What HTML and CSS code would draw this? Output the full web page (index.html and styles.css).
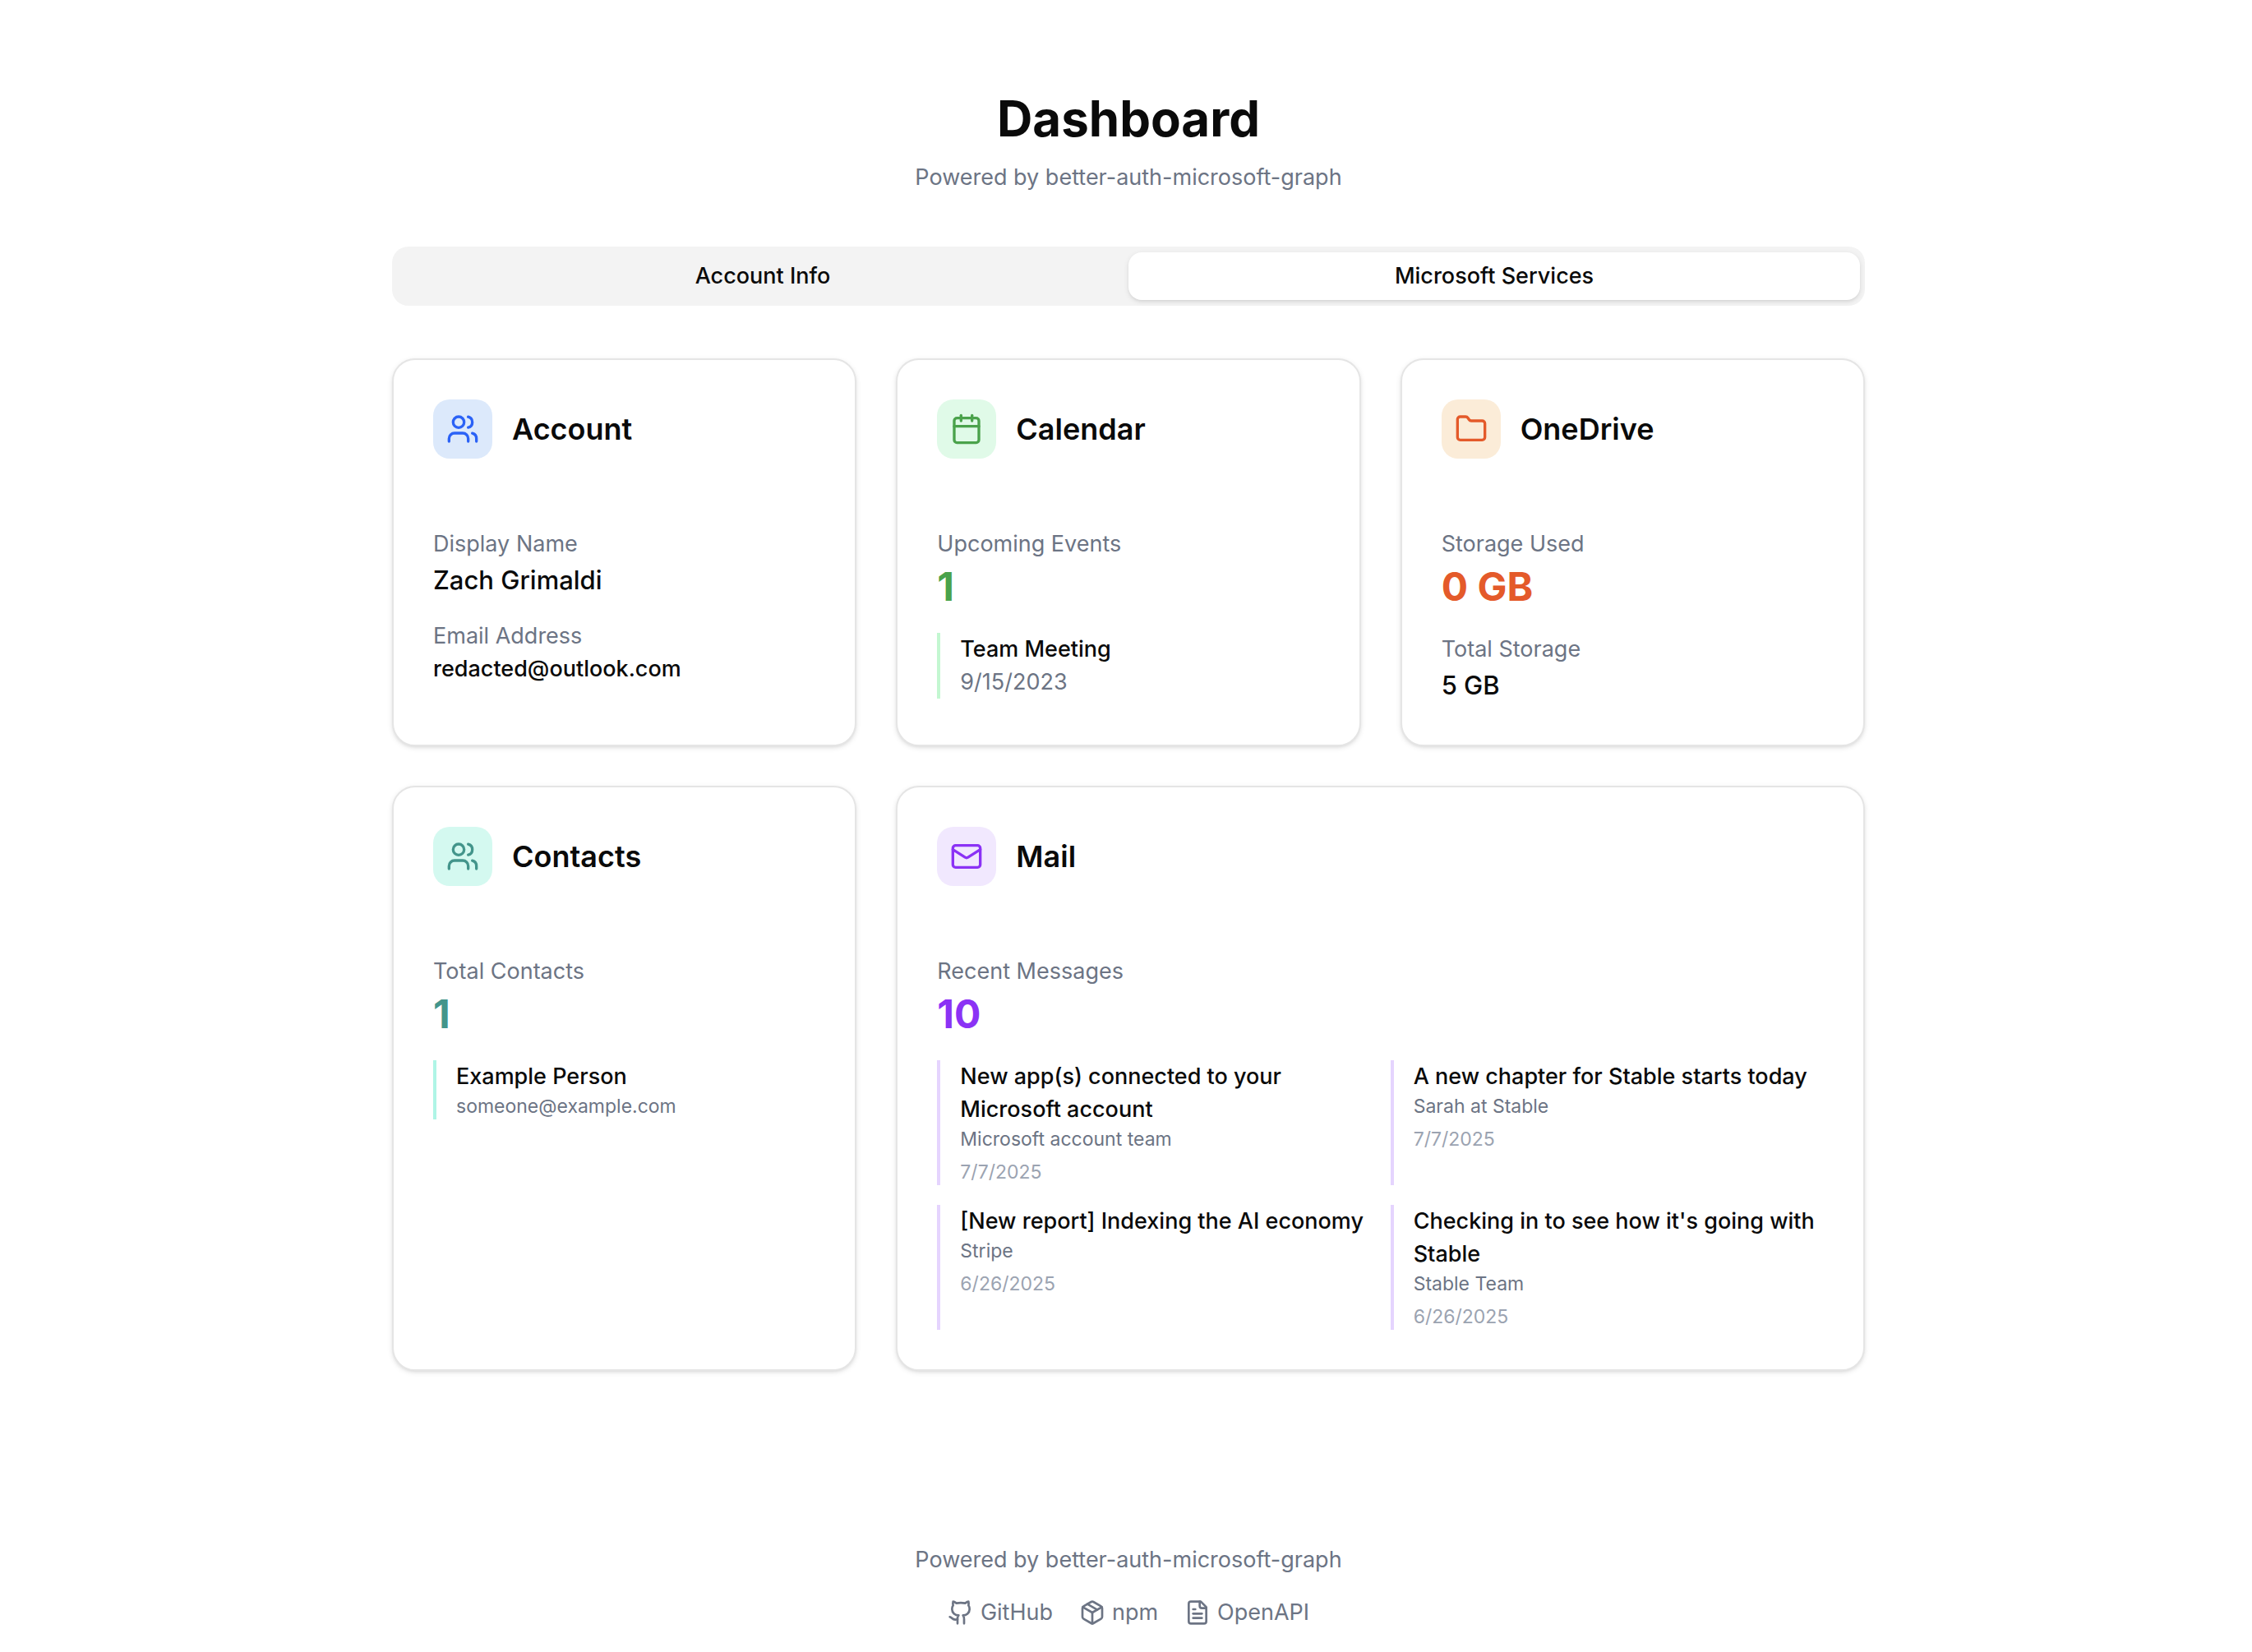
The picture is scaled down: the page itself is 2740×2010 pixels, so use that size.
FILE: index.html
```html
<!DOCTYPE html>
<html lang="en">
<head>
<meta charset="utf-8">
<meta name="viewport" content="width=device-width, initial-scale=1">
<title>Dashboard</title>
<link rel="stylesheet" href="styles.css">
</head>
<body>
<svg class="sprite" aria-hidden="true">
  <symbol id="users" viewBox="0 0 24 24"><path d="M16 21v-2a4 4 0 0 0-4-4H6a4 4 0 0 0-4 4v2"/><circle cx="9" cy="7" r="4"/><path d="M22 21v-2a4 4 0 0 0-3-3.87"/><path d="M16 3.13a4 4 0 0 1 0 7.75"/></symbol>
</svg>
<div class="page">
  <header class="hero">
    <h1 class="hero-title">Dashboard</h1>
    <p class="muted">Powered by better-auth-microsoft-graph</p>
  </header>

  <div class="tabs" role="tablist">
    <button class="tab" type="button" role="tab" aria-selected="false">Account Info</button>
    <button class="tab tab-active" type="button" role="tab" aria-selected="true">Microsoft Services</button>
  </div>

  <main class="cards">
    <section class="card blue">
      <div class="card-head">
        <span class="badge"><svg class="icon"><use href="#users"/></svg></span>
        <h2 class="card-title">Account</h2>
      </div>
      <div class="card-body">
        <div>
          <p class="muted">Display Name</p>
          <p class="value">Zach Grimaldi</p>
        </div>
        <div>
          <p class="muted">Email Address</p>
          <p class="strong">redacted@outlook.com</p>
        </div>
      </div>
    </section>

    <section class="card green">
      <div class="card-head">
        <span class="badge"><svg class="icon" viewBox="0 0 24 24"><path d="M8 2v4"/><path d="M16 2v4"/><rect width="18" height="18" x="3" y="4" rx="2"/><path d="M3 10h18"/></svg></span>
        <h2 class="card-title">Calendar</h2>
      </div>
      <div class="card-body">
        <div>
          <p class="muted">Upcoming Events</p>
          <p class="figure">1</p>
        </div>
        <div class="item">
          <p class="strong">Team Meeting</p>
          <p class="muted">9/15/2023</p>
        </div>
      </div>
    </section>

    <section class="card orange">
      <div class="card-head">
        <span class="badge"><svg class="icon" viewBox="0 0 24 24"><path d="M20 20a2 2 0 0 0 2-2V8a2 2 0 0 0-2-2h-7.900a2 2 0 0 1-1.690-.900L9.600 3.900A2 2 0 0 0 7.930 3H4a2 2 0 0 0-2 2v13a2 2 0 0 0 2 2Z"/></svg></span>
        <h2 class="card-title">OneDrive</h2>
      </div>
      <div class="card-body">
        <div>
          <p class="muted">Storage Used</p>
          <p class="figure">0 GB</p>
        </div>
        <div>
          <p class="muted">Total Storage</p>
          <p class="value">5 GB</p>
        </div>
      </div>
    </section>

    <section class="card teal">
      <div class="card-head">
        <span class="badge"><svg class="icon"><use href="#users"/></svg></span>
        <h2 class="card-title">Contacts</h2>
      </div>
      <div class="card-body">
        <div>
          <p class="muted">Total Contacts</p>
          <p class="figure">1</p>
        </div>
        <div class="item">
          <p class="strong">Example Person</p>
          <p class="small">someone@example.com</p>
        </div>
      </div>
    </section>

    <section class="card wide purple">
      <div class="card-head">
        <span class="badge"><svg class="icon" viewBox="0 0 24 24"><rect width="20" height="16" x="2" y="4" rx="2"/><path d="m22 7-8.970 5.700a1.940 1.940 0 0 1-2.060 0L2 7"/></svg></span>
        <h2 class="card-title">Mail</h2>
      </div>
      <div class="card-body">
        <div>
          <p class="muted">Recent Messages</p>
          <p class="figure">10</p>
        </div>
        <div class="messages">
          <article class="item">
            <p class="strong">New app(s) connected to your Microsoft account</p>
            <p class="small">Microsoft account team</p>
            <p class="small date">7/7/2025</p>
          </article>
          <article class="item">
            <p class="strong">A new chapter for Stable starts today</p>
            <p class="small">Sarah at Stable</p>
            <p class="small date">7/7/2025</p>
          </article>
          <article class="item">
            <p class="strong">[New report] Indexing the AI economy</p>
            <p class="small">Stripe</p>
            <p class="small date">6/26/2025</p>
          </article>
          <article class="item">
            <p class="strong">Checking in to see how it's going with Stable</p>
            <p class="small">Stable Team</p>
            <p class="small date">6/26/2025</p>
          </article>
        </div>
      </div>
    </section>
  </main>

  <footer class="footer">
    <p class="muted">Powered by better-auth-microsoft-graph</p>
    <nav class="links">
      <a class="link" href="#github"><svg class="icon" viewBox="0 0 24 24"><path d="M15 22v-4a4.800 4.800 0 0 0-1-3.500c3 0 6-2 6-5.500.080-1.250-.270-2.480-1-3.500.280-1.150.280-2.350 0-3.500 0 0-1 0-3 1.500-2.640-.500-5.360-.500-8 0C6 2 5 2 5 2c-.300 1.150-.300 2.350 0 3.500A5.403 5.403 0 0 0 4 9c0 3.500 3 5.500 6 5.500-.390.490-.680 1.050-.850 1.650-.170.600-.220 1.230-.150 1.850v4"/><path d="M9 18c-4.510 2-5-2-7-2"/></svg>GitHub</a>
      <a class="link" href="#npm"><svg class="icon" viewBox="0 0 24 24"><path d="M11 21.730a2 2 0 0 0 2 0l7-4A2 2 0 0 0 21 16V8a2 2 0 0 0-1-1.730l-7-4a2 2 0 0 0-2 0l-7 4A2 2 0 0 0 3 8v8a2 2 0 0 0 1 1.730z"/><path d="M12 22V12"/><path d="M3.290 7 12 12l8.710-5"/><path d="m7.500 4.270 9 5.150"/></svg>npm</a>
      <a class="link" href="#openapi"><svg class="icon" viewBox="0 0 24 24"><path d="M15 2H6a2 2 0 0 0-2 2v16a2 2 0 0 0 2 2h12a2 2 0 0 0 2-2V7Z"/><path d="M14 2v4a2 2 0 0 0 2 2h4"/><path d="M10 9H8"/><path d="M16 13H8"/><path d="M16 17H8"/></svg>OpenAPI</a>
    </nav>
  </footer>
</div>
</body>
</html>
```
FILE: styles.css
```css
* {
  box-sizing: border-box;
}

body,
h1,
h2,
p {
  margin: 0;
}

body {
  background: #fff;
  color: #0a0a0a;
  font-family: Inter, "Liberation Sans", sans-serif;
  font-size: 27px;
  line-height: 40px;
}

.sprite {
  display: none;
}

.page {
  max-width: 1798px;
  margin: 0 auto;
  padding: 108px 0 24px 6px;
}

.hero {
  display: flex;
  flex-direction: column;
  gap: 16px;
  text-align: center;
}

.hero-title {
  font-size: 60px;
  line-height: 72px;
  font-weight: 700;
}

.muted {
  color: #6c7484;
}

.tabs {
  display: grid;
  grid-template-columns: 1fr 1fr;
  margin: 64px 0;
  padding: 7px 6px;
  border-radius: 20px;
  background: #f3f3f3;
}

.tab {
  padding: 9px 16px;
  border: 0;
  border-radius: 16px;
  background: transparent;
  color: inherit;
  font: inherit;
  font-weight: 500;
}

.tab-active {
  background: #fff;
  box-shadow: 0 2px 6px rgb(0 0 0 / 10%), 0 2px 4px -2px rgb(0 0 0 / 10%);
}

.cards {
  display: grid;
  grid-template-columns: repeat(3, 1fr);
  gap: 48px;
}

.card {
  padding: 48px;
  border: 2px solid #e5e5e5;
  border-radius: 28px;
  background: #fff;
  box-shadow: 0 2px 6px rgb(0 0 0 / 10%), 0 2px 4px -2px rgb(0 0 0 / 10%);
}

.wide {
  grid-column: span 2;
}

.card-head {
  display: flex;
  align-items: center;
  gap: 24px;
  margin-bottom: 84px;
}

.card-title {
  font-size: 36px;
  line-height: 40px;
  font-weight: 600;
}

.badge {
  display: flex;
  padding: 16px;
  border-radius: 20px;
  background: var(--tint);
  color: var(--accent);
}

.icon {
  width: 40px;
  height: 40px;
  fill: none;
  stroke: currentColor;
  stroke-width: 2;
  stroke-linecap: round;
  stroke-linejoin: round;
}

.card-body {
  display: flex;
  flex-direction: column;
  gap: 24px;
}

.value {
  font-size: 31px;
  line-height: 48px;
  font-weight: 500;
}

.strong {
  font-weight: 500;
}

.figure {
  color: var(--accent);
  font-size: 48px;
  line-height: 64px;
  font-weight: 700;
}

.item {
  padding-left: 24px;
  border-left: 4px solid var(--line);
}

.small {
  color: #6c7484;
  font-size: 23px;
  line-height: 32px;
}

.date {
  margin-top: 8px;
  color: #9ba3b1;
}

.messages {
  display: grid;
  grid-template-columns: 1fr 1fr;
  gap: 24px;
}

.blue {
  --accent: #2b62f6;
  --tint: #dce9fb;
}

.green {
  --accent: #4aa24b;
  --tint: #e0fae8;
  --line: #c3f7d1;
}

.orange {
  --accent: #e45a2a;
  --tint: #fbecd8;
}

.teal {
  --accent: #43958b;
  --tint: #d4f9f0;
  --line: #aff5e6;
}

.purple {
  --accent: #8b32f5;
  --tint: #f1e8fe;
  --line: #e5d4fe;
}

.footer {
  display: flex;
  flex-direction: column;
  align-items: center;
  gap: 24px;
  margin-top: 210px;
}

.links {
  display: flex;
  flex-wrap: wrap;
  gap: 32px;
}

.link {
  display: flex;
  align-items: center;
  gap: 8px;
  color: #6c7484;
  text-decoration: none;
}

.link .icon {
  width: 32px;
  height: 32px;
}
```
